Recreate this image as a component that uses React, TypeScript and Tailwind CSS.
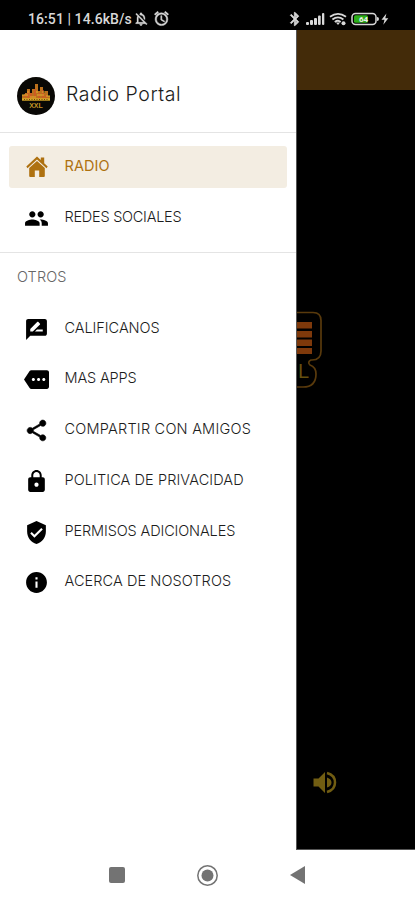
import React from 'react';
import {
  MdAlarm,
  MdBluetooth,
  MdInfo,
  MdLock,
  MdMore,
  MdOutlineNotificationsOff,
  MdPeople,
  MdRateReview,
  MdShare,
  MdVerifiedUser,
} from 'react-icons/md';
import type { IconType } from 'react-icons';

interface MenuItem {
  label: string;
  icon: IconType;
  tracking: string;
  iconClass?: string;
}

const otherItems: MenuItem[] = [
  { label: 'CALIFICANOS', icon: MdRateReview, tracking: 'tracking-[-0.05px]' },
  { label: 'MAS APPS', icon: MdMore, tracking: 'tracking-[-0.15px]' },
  {
    label: 'COMPARTIR CON AMIGOS',
    icon: MdShare,
    tracking: 'tracking-[0.22px]',
    iconClass: '[&>path:last-child]:stroke-black [&>path:last-child]:stroke-[0.6px]',
  },
  { label: 'POLITICA DE PRIVACIDAD', icon: MdLock, tracking: 'tracking-[0.09px]' },
  { label: 'PERMISOS ADICIONALES', icon: MdVerifiedUser, tracking: 'tracking-[-0.13px]' },
  { label: 'ACERCA DE NOSOTROS', icon: MdInfo, tracking: 'tracking-[0.08px]' },
];

function StatusBar() {
  return (
    <header className="flex h-[30px] shrink-0 items-end bg-black pb-[3px] pl-7 pr-[26px] text-[#d8d8d8]">
      <span className="whitespace-nowrap font-[Roboto] text-[14px] font-medium leading-[15px] tracking-[0.08px]">
        16:51 | 14.6kB/s
      </span>
      <MdOutlineNotificationsOff className="ml-px size-4 [&>path:last-child]:stroke-current [&>path:last-child]:stroke-[0.5px]" />
      <MdAlarm className="ml-1 size-[17px] [&>path:last-child]:stroke-current [&>path:last-child]:stroke-[0.7px]" />
      <div className="ml-auto flex items-center">
        <MdBluetooth className="size-4 [&>path:last-child]:stroke-current [&>path:last-child]:stroke-[1.1px]" />
        <svg className="ml-[2px]" width="20" height="14" viewBox="0 0 20 14" fill="currentColor">
          <rect x="1" y="10" width="3" height="3" rx="1" />
          <rect x="5" y="8" width="3" height="5" rx="1" />
          <rect x="9" y="6" width="3" height="7" rx="1" />
          <rect x="13" y="3.5" width="2.7" height="9.5" rx="1" />
          <rect x="17" y="1" width="2.3" height="12" rx="1" />
        </svg>
        <svg className="ml-[4px]" width="18" height="14" viewBox="0 0 18 14" fill="none" stroke="currentColor" strokeWidth="1.8">
          <path d="M1 4.8Q9-1.2 17 4.8M3.4 7.5Q9 3.2 14.4 7.5M5.8 10Q9 7.5 11.7 10" />
          <path d="M7 10.5h4L9 13z" fill="currentColor" stroke="none" />
          <circle cx="14.5" cy="11.2" r="2" fill="currentColor" stroke="none" />
        </svg>
        <svg className="ml-[4px]" width="38" height="14" viewBox="0 0 38 14">
          <rect x="1" y="1.5" width="24" height="11" rx="3.5" fill="none" stroke="#d8d8d8" strokeWidth="1.5" />
          <rect x="3" y="3.3" width="14" height="7.4" rx="1.5" fill="#2cae18" />
          <path d="M26 5q2 0 2 2t-2 2z" fill="#d8d8d8" />
          <text x="8" y="10" fontFamily="Roboto" fontSize="8" fontWeight="700" fill="#ededed">64</text>
          <path d="M35.4 1.5 30.5 7.8h3l-1.2 5 5-6.5h-3z" fill="#d8d8d8" />
        </svg>
      </div>
    </header>
  );
}

function Logo() {
  return (
    <svg className="size-[38px] shrink-0" viewBox="0 0 38 38">
      <circle cx="19" cy="19" r="19" fill="#090805" />
      <path d="M5 23v-5h3v-2h2v-4h3v4h2v-4h3V7h3v7h2v-4h3v6h2v-2h3v5h2v4z" fill="#bb701c" />
      <path d="M8 20v-3m3 4v-7m3 7v-5m4 5v-9m4 9v-5m4 5v-8m3 8v-3" stroke="#d4512a" strokeWidth="1.3" />
      <path d="M5 18h6m2 2h6m1-2h7m2 1h4M10 15h2m7 0h2m4 0h3" stroke="#deb02e" strokeWidth="1.1" />
      <path d="M5 22.5h28" stroke="#dcaa28" strokeWidth="2.4" />
      <path d="M7 22.5h25" stroke="#6b4210" strokeWidth="1" strokeDasharray="1 1.5" />
      <text x="19" y="30.5" textAnchor="middle" fontFamily="Liberation Sans" fontSize="7" fontWeight="700" fill="#c39525">XXL</text>
    </svg>
  );
}

function HomeIcon() {
  return (
    <svg className="ml-px size-[22px] shrink-0" viewBox="0 0 22 22" fill="currentColor">
      <path d="M11 .5 14.8 4V1.5h3.4v5.7l3.5 3.3-1.2 1.7L11 3.5l-9.5 8.7-1.2-1.7z" />
      <path d="M11 4.9 18.8 12V20q0 1-1 1h-4.6v-6.5H8.8V21H4.2q-1 0-1-1v-8z" />
    </svg>
  );
}

function DrawerItem({ label, icon: Icon, tracking, iconClass = '' }: MenuItem) {
  return (
    <li className="flex h-[42px] items-center pl-[15px]">
      <Icon className={`relative top-px size-[25px] shrink-0 text-black ${iconClass}`} />
      <span className={`ml-[15.5px] whitespace-nowrap pb-px ${tracking}`}>{label}</span>
    </li>
  );
}

function Drawer() {
  return (
    <aside className="w-[296px] shrink-0 bg-white font-['Inter',sans-serif] text-[14.5px] font-light leading-5 text-[#1c1c1c]">
      <div className="flex h-[103px] items-end border-b border-[#e4e4e4] pb-[17px] pl-[17px]">
        <Logo />
        <h1 className="ml-[11px] whitespace-nowrap pb-[7px] text-[19.5px] leading-7 tracking-[0.55px]">Radio Portal</h1>
      </div>

      <ul className="flex h-[120px] flex-col gap-[8px] border-b border-[#e4e4e4] px-[9px] pt-[13px]">
        <li className="flex h-[42px] items-center rounded-[3px] bg-[#f3ede2] pl-4 text-[#ae7110]">
          <HomeIcon />
          <span className="ml-[16.5px] whitespace-nowrap pb-[3px] font-normal tracking-[0.1px]">RADIO</span>
        </li>
        <DrawerItem label="REDES SOCIALES" icon={MdPeople} tracking="tracking-[-0.25px]" />
      </ul>

      <h2 className="pl-[17px] pt-[14px] text-[14.5px] tracking-[0.1px] text-[#666]">OTROS</h2>
      <ul className="mt-5 flex flex-col gap-[8.8px] px-[9px]">
        {otherItems.map((item) => (
          <DrawerItem key={item.label} {...item} />
        ))}
      </ul>
    </aside>
  );
}

function RadioScreen() {
  return (
    <main className="flex flex-1 flex-col border-b border-l border-[#555] bg-black">
      <div className="h-[60px] shrink-0 bg-[#432b09]" />
      <svg className="mt-[218px] shrink-0" width="30" height="84" viewBox="0 0 30 84" fill="none">
        <path d="M0 4.5h16q8 0 8 8V43q0 9-9 9h-1q-4 2-1 5 6 2 6 9 0 13-13 13H0" stroke="#593a0c" strokeWidth="1.7" />
        <path d="M0 14h15v6.5H0zM0 23h15v6.5H0zM0 31.5h15V38H0zM0 40h15v6H0z" fill="#7e390b" />
        <text x="1" y="70" fontFamily="Liberation Sans" fontSize="20" fill="#65500f">L</text>
      </svg>
      <svg className="ml-4 mt-[379px] shrink-0 text-[#715d12]" width="24" height="23" viewBox="0 0 24 23" fill="currentColor">
        <path d="M.5 7.5h5L12 1v21l-6.500-6.500h-5zM14 6.500q4.500 1.500 4.500 5T14 16.500z" />
        <path d="M14 2q8 2 8 9.500T14 21" fill="none" stroke="currentColor" strokeWidth="2.5" />
      </svg>
    </main>
  );
}

function NavigationBar() {
  return (
    <nav className="flex h-[50px] shrink-0 items-center bg-white pl-[109px] text-[#737373]">
      <div className="size-4 rounded-[2px] bg-[#737373]" />
      <svg className="ml-[71px]" width="23" height="23" viewBox="0 0 23 23">
        <circle cx="11.5" cy="11.5" r="9.7" fill="none" stroke="currentColor" strokeWidth="1.5" />
        <circle cx="11.5" cy="11.5" r="6" fill="currentColor" />
      </svg>
      <svg className="ml-[71px]" width="16" height="19" viewBox="0 0 16 19" fill="currentColor">
        <path d="M15 0v18L0 9z" />
      </svg>
    </nav>
  );
}

export default function App() {
  return (
    <div className="flex h-[900px] w-[415px] flex-col overflow-hidden bg-white">
      <StatusBar />
      <div className="flex h-[820px] shrink-0">
        <Drawer />
        <RadioScreen />
      </div>
      <NavigationBar />
    </div>
  );
}
